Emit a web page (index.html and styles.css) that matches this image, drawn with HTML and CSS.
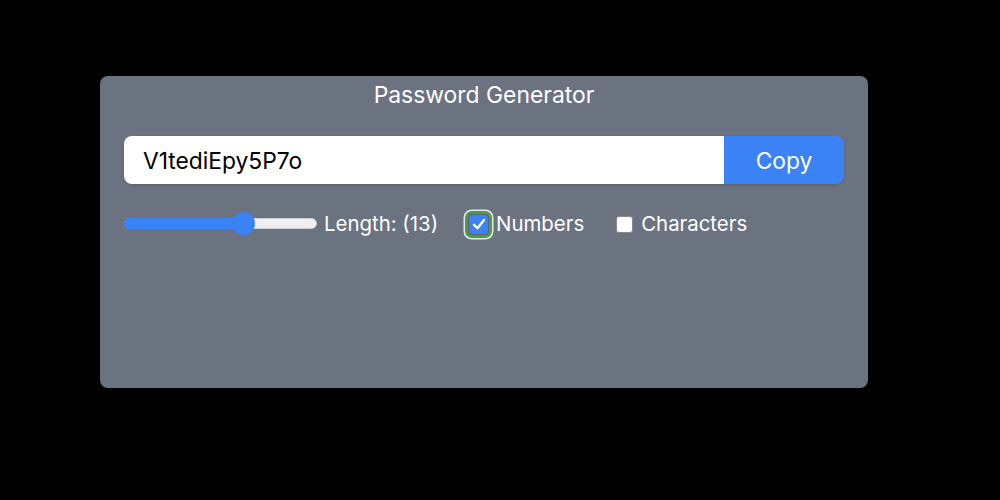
FILE: index.html
```html
<!DOCTYPE html>
<html>
<head>
<meta charset="utf-8">
<link rel="stylesheet" href="styles.css">
</head>
<body>
<div class="card">
  <h1 class="title">Password Generator</h1>
  <div class="field">
    <input class="pw" type="text" value="V1tediEpy5P7o" readonly>
    <button class="copy">Copy</button>
  </div>
  <div class="options">
    <div class="slider">
      <div class="fill" style="width: 118px"></div>
      <div class="thumb" style="left: 107px"></div>
    </div>
    <label class="len">Length: (13)</label>
    <label class="opt">
      <span class="box checked"><svg viewBox="0 0 16 16" width="16" height="16"><path d="M3 8.8 L6.5 12.2 L13 4" fill="none" stroke="#fff" stroke-width="2.4" stroke-linecap="round" stroke-linejoin="round"/></svg></span>
      <span>Numbers</span>
    </label>
    <label class="opt opt2">
      <span class="box"></span>
      <span>Characters</span>
    </label>
  </div>
</div>
</body>
</html>
```
FILE: styles.css
```css
html, body {
  margin: 0;
  padding: 0;
  background: #000;
  font-family: Inter, "Noto Sans", sans-serif;
}
.card {
  margin: 76px 0 0 100px;
  width: 768px;
  height: 312px;
  box-sizing: border-box;
  background: #6b7280;
  border-radius: 8px;
  padding: 4px 24px 0 24px;
}
.title {
  margin: 0;
  text-align: center;
  color: #fff;
  font-size: 22.9px;
  font-weight: 400;
  line-height: 30px;
}
.field {
  display: flex;
  margin-top: 26px;
  height: 48px;
  border-radius: 8px;
  overflow: hidden;
  box-shadow: 0 1px 3px rgba(0,0,0,0.15);
}
.pw {
  flex: 1;
  border: 0;
  outline: 0;
  padding: 0 0 0 19px;
  font-family: inherit;
  font-size: 22.8px;
  color: #000;
  background: #fff;
}
.copy {
  width: 120px;
  border: 0;
  background: #3b82f6;
  color: #fff;
  font-family: inherit;
  font-size: 22.8px;
  padding: 0;
}
.options {
  display: flex;
  align-items: center;
  margin-top: 26px;
  height: 28px;
  color: #fff;
  font-size: 20.4px;
  line-height: 28px;
}
.slider {
  position: relative;
  width: 193px;
  height: 11px;
  box-sizing: border-box;
  border-radius: 6px;
  background: #efefef;
  border: 1px solid #cfcfcf;
  margin-top: -1px;
}
.fill {
  position: absolute;
  left: -1px;
  top: -1px;
  bottom: -1px;
  background: #3b82f6;
  border-radius: 6px 0 0 6px;
}
.thumb {
  position: absolute;
  top: -7px;
  width: 23px;
  height: 23px;
  border-radius: 50%;
  background: #3b82f6;
}
.len {
  margin-left: 7px;
}
.opt {
  display: flex;
  align-items: center;
  margin-left: 31px;
}
.opt2 {
  margin-left: 32px;
}
.box {
  width: 17px;
  height: 17px;
  box-sizing: border-box;
  background: #fff;
  border: 1px solid #8a8a8a;
  border-radius: 3px;
  margin-right: 8px;
  display: flex;
  align-items: center;
  justify-content: center;
}
.box.checked {
  background: #3b82f6;
  border: 0;
  border-radius: 3px;
  width: 19px;
  height: 19px;
  box-shadow: 0 0 0 1px #5d6470, 0 0 0 4px #4f9a4a, 0 0 0 5.5px #e4e8e4;
}
```
